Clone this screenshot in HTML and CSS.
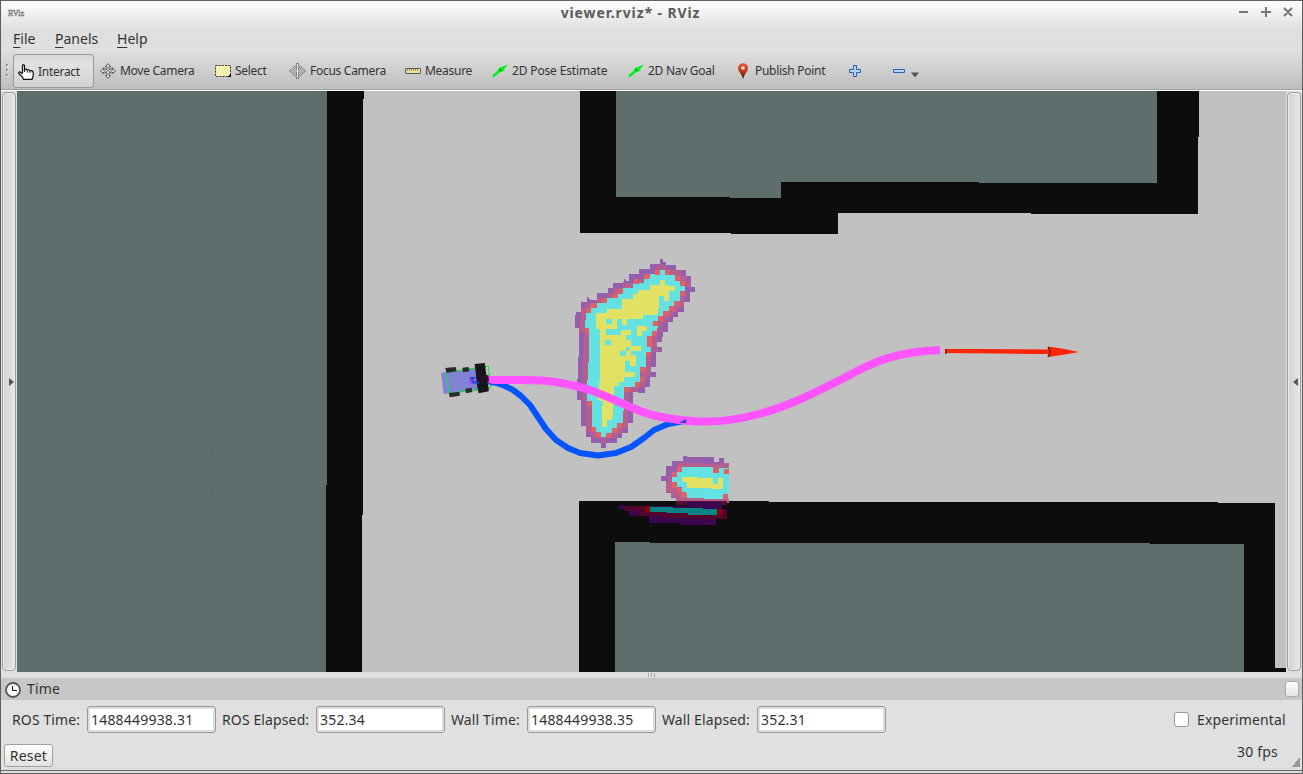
FILE: index.html
```
<!DOCTYPE html>
<html lang="en">
<head>
<meta charset="utf-8">
<title>viewer.rviz* - RViz</title>
<link rel="stylesheet" href="styles.css">
</head>
<body>
<div class="window">
  <header class="chrome">
    <div class="titlebar">
      <svg class="logo" width="20" height="16" viewBox="0 0 20 16"><text class="logo-text" x="1" y="11" textLength="16" lengthAdjust="spacingAndGlyphs">RViz</text></svg>
      <h1 class="title">viewer.rviz* - RViz</h1>
      <svg class="controls" width="56" height="12" viewBox="0 0 56 12"><path d="M1 6h9M23 6h10M28 1v10M46 2l8 8M54 2l-8 8"/></svg>
    </div>
    <nav class="menubar"><span class="menu file"><u>F</u>ile</span><span class="menu panels"><u>P</u>anels</span><span class="menu help"><u>H</u>elp</span></nav>
    <div class="toolbar">
      <svg class="grip" width="8" height="16" viewBox="0 0 8 16"><path d="M1 2h2M1 7h2M1 12h2" stroke="#888" stroke-width="2"/><path d="M2 3h2M2 8h2M2 13h2" stroke="#fff"/></svg>
      <button class="tool active">
        <svg width="16" height="16" viewBox="0 0 16 16"><path d="M4.500 9V1.500Q5.500-.3 6.500 1.500V6Q8 4.300 9.200 6.200Q11 5 12 7Q14.500 6 15.200 8.500V12L14 15.400H5.500L4.500 13L.700 9.500Q.500 7 2.500 8.200L4.500 10" fill="#fff" stroke="#111" stroke-width="1.200"/><path d="M6.500 6v2M9.300 6.500v2M12 7v2" stroke="#111"/></svg>
        <span>Interact</span></button>
      <button class="tool"><svg width="16" height="16" viewBox="0 0 16 16"><path d="M8 .6l2.500 3H9v2.600l2 .8h1.500V5.300L15.500 8l-3 2.700V9H11L9 10v2.500h1.500L8 15.400 5.500 12.500H7V10L5 9H3.500v1.700L.5 8l3-2.700V7H5l2-.8V3.600H5.500z" fill="#eee" stroke="#555"/><path d="M3 4l10 7M13 4L3 11" stroke="#777"/></svg><span>Move Camera</span></button>
      <button class="tool"><svg width="16" height="16" viewBox="0 0 16 16"><rect x=".5" y="2.500" width="15" height="11" fill="#f7f0b0" stroke="#333" stroke-dasharray="2 1.200"/><path d="M16 10.500V14h-3.500z"/></svg><span>Select</span></button>
      <button class="tool"><svg width="17" height="16" viewBox="0 0 17 16"><circle cx="8.500" cy="8" r="4.800" fill="none" stroke="#777" stroke-width="2.600"/><circle cx="8.500" cy="8" r="4.800" fill="none" stroke="#eee"/><path d="M8.500 0v16M.5 8h16" stroke="#777" stroke-width="2.600"/><path d="M8.500 1v14M1.500 8h14" stroke="#eee"/></svg><span>Focus Camera</span></button>
      <button class="tool"><svg width="16" height="16" viewBox="0 0 16 16"><rect x=".5" y="5.500" width="15" height="5" rx=".6" fill="#f0e1a0" stroke="#555"/><path d="M2.500 6v2M4.500 6v2M6.500 6v2M8.500 6v2M10.500 6v2M12.500 6v2" stroke="#998b68"/></svg><span>Measure</span></button>
      <button class="tool wide"><svg width="16" height="16" viewBox="0 0 16 16"><path d="M0 13l6-6 1-2L15.500 1.500 11 8.500 8.500 9 1.500 14.500z" fill="#00f51c"/><path d="M7.500 6L9 8" stroke="#096b16" stroke-width="1.200"/></svg><span>2D Pose Estimate</span></button>
      <button class="tool"><svg width="16" height="16" viewBox="0 0 16 16"><path d="M0 13l6-6 1-2L15.500 1.500 11 8.500 8.500 9 1.500 14.500z" fill="#00f51c"/><path d="M7.500 6L9 8" stroke="#096b16" stroke-width="1.200"/></svg><span>2D Nav Goal</span></button>
      <button class="tool"><svg width="16" height="16" viewBox="0 0 16 16"><defs><linearGradient id="pin" x2="0" y2="1"><stop stop-color="#ee5438"/><stop offset=".5" stop-color="#c13a20"/><stop offset="1" stop-color="#26250d"/></linearGradient></defs><path d="M8 16Q7 12 4 8.500Q1.800 4 4.600 1.500Q8-1.200 11.400 1.500Q14.200 4 12 8.500Q9 12 8 16z" fill="url(#pin)"/><circle cx="8" cy="5" r="1.800" fill="#eee"/></svg><span>Publish Point</span></button>
      <button class="tool"><svg width="12" height="12" viewBox="0 0 12 12"><path d="M4.500.5h3v4h4v3h-4v4h-3v-4h-4v-3h4z" fill="#b8d4f3" stroke="#2864b3"/></svg></button>
      <button class="tool"><svg width="12" height="12" viewBox="0 0 12 12"><path d="M.5 4.500h11v3H.5z" fill="#b8d4f3" stroke="#2864b3"/></svg></button>
      <svg class="drop" width="8" height="6" viewBox="0 0 8 6"><path d="M0 .500h8L4 5.500z" fill="#555"/></svg>
    </div>
  </header>

  <main class="workspace">
    <div class="handle"><i class="arrow right"></i></div>
    <svg class="map" width="1269" height="581" viewBox="17 91 1269 581">
      <rect x="17" y="91" width="1269" height="581" fill="#c1c1c1"/>
      <g shape-rendering="crispEdges">
        <g fill="#0d0d0d">
          <path d="M327 91h37v8h-1v416h-1v157h-36z"/>
          <path d="M580 91h619v46h-1v77h-167v-1H838v21H731v-1H580z"/>
          <path d="M579 501h190v1h449v1h57v165h11v4H579z"/>
        </g>
        <g fill="#5e6e6d">
          <path d="M17 91h310v394h-1v187H17z"/>
          <path d="M616 91h541v92H979v-1H781v16h-51v-1H616z"/>
          <path d="M615 542h35v1h500v1h94v128H615z"/>
        </g>
        <path d="M1275 503h11v165h-7v-1h-4z" fill="#c1c1c1"/>
        <path d="M211.500 445v9M212.500 465v3M211.500 488v7" stroke="#566865"/>
        <g transform="translate(560 250) scale(.33333)">
          <path fill="#955fad" d="M300 28H309V36H317V45H348V60H378V78H393V110H405V126H390V155H372V185H355V200H339V215H323V245H308V262H306V276H290V291H306V306H288V350H272V367H287V382H270V412H254V428H235V422H218V518H203V548H186V563H171V578H137V594H123V578H92V562H78V527H63V450H52V400L57 290V234H45V205L48 187H63V157H80L82 142 90 150H111V129H143V113H158V99H190L192 84 200 93H207V72H238V57H270V42H300Z"/>
          <path fill="#b45f8d" d="M292 45H317V58H333V60H362V74H378V90H390V110H375V140H372V170H355V185H340V200H323V215H308V245H290V306H274V350H270V382H254V412H235V425H207V485H203V533H186V548H171V563H137V578H123V563H92V547H78V500L76 450H66V400L72 290V250H60V209L64 187V172H81V158H111V144H143V129H160V115H190V100H222V86H254V71H285V58H292Z"/>
          <path fill="#64e1e1" d="M300 60H315V75H345V90H360V108H375V123H360V153H343V168H327V183H310V198H294V228L291 243H275V259H262V290H274V306H258V350H240V395H224V411H192V460L188 520H170V535H155V550H140V560H123V545H108V530H95V453H82V400L88 290V240L75 234 78 187H93V172H109V158H141V145H173V130H188V115H220V100H252V87H270V72H300Z"/>
          <path fill="#e06065" d="M284 60h16v14h-16zM315 60h15v15h-15zM345 78h16v14h-16zM360 93h15v15h-15zM360 122h15v16h-15zM342 153h14v15h-14zM326 168h15v15h-15zM309 183h17v15h-17zM294 198h15v15h-15zM279 213h16v15h-16zM276 243h15v15h-15zM260 259h16v32h-16zM258 306h16v14h-16zM240 351h17v15h-17zM240 382h14v13h-14zM225 395h14v16h-14zM191 412h16v14h-16zM171 520h15v14h-15zM155 534h16v15h-16zM138 548h16v15h-16zM92 531h16v14h-16zM108 546h15v15h-15zM82 453h13v16H82zM75 235h13v16H75zM78 174h15v15H78zM94 159h16v15H94zM126 144h15v15h-15zM159 131h14v14h-14zM173 117h15v14h-15zM222 87h15v15h-15zM253 73h16v14h-16z"/>
          <path fill="#e1e164" d="M300 90H315V104H328V108H345V123H327V153H312V138H297V168L292 196H250V207H201V224H187V208H171V238H138V254H183V240H214V255H198V270H214V287H243V303H228V350H225V380H192V395H177V408H163V450H160V500H155V510H141V530H126V478L130 455 114 450 120 380V237H108V190H141V178H187V148H220V132H235V120H270V106H300ZM232 227H260V243H247V257H232Z"/>
          <path fill="#64e1e1" d="M138 207h17v15h-17zM135 270h17v14h-17zM180 303h17v15h-17zM214 303h14v13h-14zM211 303h-14v-12h14zM195 332h16v15h-16zM195 347h33v18h-33z"/>
        </g>
        <g transform="translate(610 445) scale(.33333)">
          <path fill="#955fad" d="M219 33h13v3h80v15h15V39h15v14h15v120H198v-15h-15v-15h-15v-36h-15V93h15V63h18V48h33z"/>
          <path fill="#b45f8d" d="M203 53l124 4v-3h30v117H201v-16h-18v-14h-15v-31h5V95h12V80h18z"/>
          <path fill="#64e1e1" d="M216 66H310V68H356V163H282V159H229V142H215V127H200V112H186V96H200V80H216Z"/>
          <path fill="#e06065" d="M201 64h15v16h-15zM186 80h15v15h-15zM186 112h15v16h-15zM203 128h12v16h-12zM213 144h17v15h-17zM309 68h17v16h-17zM341 71h16v15h-16zM339 147h15v16h-15z"/>
          <path fill="#e1e164" d="M216 96H264V99H310V116H324V100H339V132H303V129H231V112H216Z"/>
          <path fill="#5a0f2d" d="M198 168h153v11H198z"/>
          <path fill="#3b064f" d="M27 180H42V183H228V172H335V193H345V222H317V239H210V235H117V213H57V197H42V192H27Z"/>
          <path fill="#54052e" d="M42 183H105V200H155V205H230L321 209V195H350V223H230V219H155V213H87V197H42Z"/>
          <path fill="#008585" d="M120 186H188V190H278V193H322V209H233V205H171V201H120Z"/>
          <path fill="#860606" d="M105 184h15v16h-15zM321 193h15v16h-15z"/>
        </g>
      </g>
      <g transform="translate(430 350) scale(.33333)">
        <path fill="#8383d5" d="M33 68l106-14 10 67-108 11z"/>
        <path fill="none" stroke="#00f31c" stroke-width="3" d="M49 67l126-19 7 66-124 16z"/>
        <path fill="#2b2b2d" d="M46 54l31-3 3 13-31 5zM97 53l19-2 2 13-19 3zM57 129l31-4 2 12-31 5zM106 116l19-3 2 13-19 4z"/>
      </g>
      <path fill="none" stroke="#0554ff" stroke-width="6" stroke-linejoin="round" d="M490 382L497 383 505 386 513 390 521 396 530 405 538 417 546 429 556 440 568 448 580 453 598 455.500 616 453 631 447 644 438 654 430 668 424 684 421"/>
      <path fill="none" stroke="#ff54ff" stroke-width="8" d="M485 380H525C550 380 565 383 587 389C614 398 630 409 652 415C690 424 725 423 755 415C785 408 810 395 844 378C875 361 895 352 940 350"/>
      <path d="M469 377h12v7h-12z" fill="#a453e0"/>
      <path d="M470 377h6l-4 4 8 1-8 1M679 423l7-4v4z" fill="#144ae8"/>
      <g transform="translate(430 350) scale(.33333)"><path fill="#15151b" d="M134 42L164 39 167 53 166 55 176 115 176 124 146 130 143 115 142 113 136 57Z"/><path fill="#25102c" d="M146 80l29-5 2 19-29 4z"/><path fill="#1b54dc" d="M126 98l16-3 8 5-20 1zM174 96l18 8-18-1z"/></g>
      <path d="M945 349h29l84 .500v4.500l-29 0-84-1z" fill="#ff2505"/><path d="M945 349h2v5h-2z" fill="#b71b08"/><path d="M1048 346.500l14 2 17 3.500-17 3-14 2 2-5z" fill="#ff2505"/><path d="M1048 347q4 5 0 10l2-5z" fill="#681008" stroke="#681008"/>
    </svg>
    <div class="handle"><i class="arrow left"></i></div>
  </main>

  <div class="splitter"><i></i><i></i><i></i></div>
  <section class="panel">
    <div class="panel-title"><svg width="16" height="16" viewBox="0 0 16 16"><circle cx="8" cy="8" r="7" fill="#fff" stroke="#555" stroke-width="1.800"/><path d="M7.500 4v4.500H12" fill="none" stroke="#111"/></svg><span class="t-time">Time</span><button class="float"></button></div>
    <div class="fields">
      <label class="l1">ROS Time:</label><input class="field" value="1488449938.31">
      <label class="l2">ROS Elapsed:</label><input class="field" value="352.34">
      <label class="l3">Wall Time:</label><input class="field" value="1488449938.35">
      <label class="l4">Wall Elapsed:</label><input class="field" value="352.31">
      <span class="experimental"><i class="box"></i><span>Experimental</span></span>
    </div>
    <div class="status"><button class="reset">Reset</button><span class="fps">30 fps</span><i class="resize"></i></div>
  </section>
  <footer class="edge"></footer>
</div>
</body>
</html>
```

FILE: styles.css
```
* { box-sizing: border-box; }
body { margin: 0; width: 1303px; height: 774px; overflow: hidden; background: #5c5c5c; color: #333; font-family: "Noto Sans", sans-serif; font-size: 14px; }
button, input { font: inherit; color: inherit; margin: 0; letter-spacing: inherit; }
.window { width: 1303px; height: 774px; border: 1px solid #5e5e5e; background: #e0e0e0; display: flex; flex-direction: column; }
.chrome { height: 90px; flex: none; background: linear-gradient(#fff 0, #e0e0e0 27px, #dfdfdf 50px, #bebebe 88px); border-bottom: 1px solid #fff; box-shadow: inset 0 -1px #a3a3a3; }
.titlebar { height: 24px; display: grid; grid-template-columns: 80px 1fr 64px; align-items: center; padding-left: 6px; }
.logo { overflow: visible; }
.logo-text { font: 9px "Liberation Serif", serif; fill: #eee; stroke: #777; stroke-width: .6px; }
.title { margin: 0; padding-right: 64px; text-align: center; font-size: 14px; letter-spacing: .9px; line-height: 22px; color: #5b5b5b; }
.controls { stroke: #777; stroke-width: 2; fill: none; margin-top: -2px; }
.menubar { height: 28px; display: flex; align-items: center; padding-left: 12px; }
.menu { line-height: 20px; }
.menu u { text-underline-offset: 3px; }
.file { width: 42px; }
.panels { width: 62px; }
.toolbar { height: 36px; padding: 1px 0 1px 4px; display: grid; grid-template-columns: 8px 87px 115px 74px 116px 87px 136px 107px 114px 44px 18px 8px; align-items: center; font-size: 12px; letter-spacing: -.28px; }
.tool { border: 0; padding: 0; height: 34px; background: none; display: flex; align-items: center; gap: 4px; text-align: left; white-space: nowrap; }
.tool svg { flex: none; }
.tool span { margin-top: -2px; }
.wide { letter-spacing: -.15px; }
.active { width: 81px; padding: 2px 0 0 4px; border: 1px solid #999; border-radius: 3px; background: linear-gradient(#d6d6d6, #e1e1e1 30%, #d2d2d2); }
.drop { margin-top: 7px; }
.workspace { height: 581px; flex: none; display: flex; }
.map { display: block; flex: none; }
.handle { flex: none; width: 14px; height: 579px; border: 1px solid #9b9b9b; border-radius: 4px; margin: 1px 1px 0 1px; background: linear-gradient(90deg, #d3d3d3, #e6e6e6); box-shadow: inset 0 0 0 1px #ececec; display: flex; align-items: center; justify-content: center; }
.arrow { border: 4px solid transparent; width: 0; height: 0; }
.right { border-left: 5px solid #555; border-right: 0; margin-left: 5px; }
.left { border-right: 5px solid #555; border-left: 0; margin-left: 2px; }
.splitter { height: 6px; flex: none; display: flex; gap: 2px; justify-content: center; align-items: center; }
.splitter i { width: 1px; height: 4px; background: #aaa; }
.panel { height: 92px; flex: none; }
.panel-title { height: 22px; background: #c7c7c7; display: flex; align-items: center; padding: 0 3px 0 4px; gap: 6px; }
.panel-title svg { margin-top: 1px; }
.t-time { margin-top: -2px; letter-spacing: .15px; }
.float { margin-left: auto; width: 14px; height: 16px; border: 1px solid #aaa; border-radius: 3px; background: linear-gradient(#fff, #e4e4e4); padding: 0; }
.fields { height: 42px; padding: 0 0 4px 11px; display: flex; align-items: center; white-space: nowrap; letter-spacing: .12px; }
.field { width: 129px; height: 27px; border: 1px solid #999; border-radius: 3px; background: #fff; box-shadow: inset 0 0 0 2px #dedede; padding: 1px 4px 0 3px; letter-spacing: .2px; }
.l1 { width: 75px; }
.l2 { width: 100px; padding-left: 6px; }
.l3 { width: 82px; padding-left: 6px; }
.l4 { width: 101px; padding-left: 6px; }
.experimental { margin-left: 288px; display: flex; align-items: center; gap: 8px; }
.box { width: 15px; height: 15px; border: 1px solid #999; border-radius: 3px; background: #fff; }
.status { height: 28px; display: flex; align-items: flex-start; padding: 2px 2px 0 3px; }
.reset { width: 49px; height: 23px; padding: 0; border: 1px solid #a0a0a0; border-radius: 3px; background: linear-gradient(#fff, #e2e2e2); line-height: 19px; letter-spacing: .2px; }
.fps { margin-left: auto; width: 54px; line-height: 16px; letter-spacing: .2px; }
.resize { width: 9px; height: 9px; margin-top: 14px; background: linear-gradient(135deg, transparent 50%, #999 50%); }
.edge { height: 3px; border-top: 1px solid #666; background: #ddd; }
```
